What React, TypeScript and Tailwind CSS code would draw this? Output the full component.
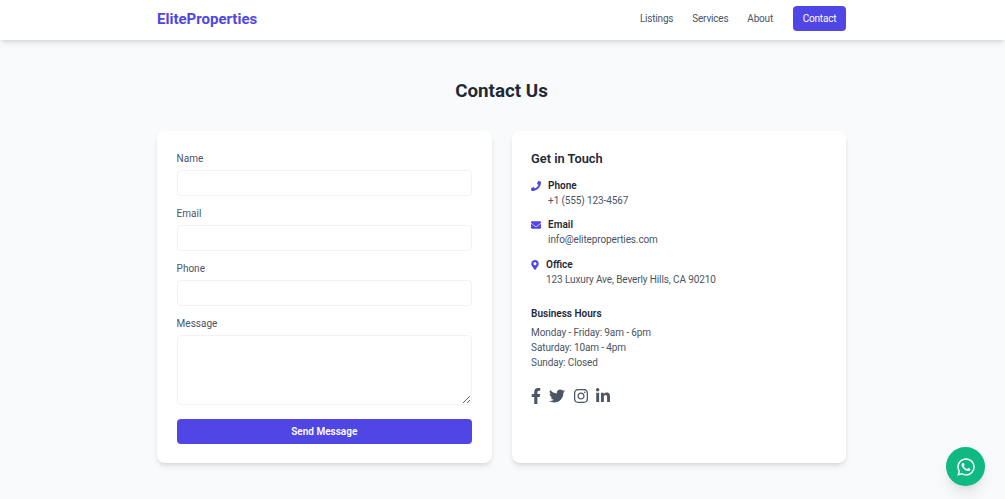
import { FaEnvelope, FaFacebookF, FaInstagram, FaLinkedinIn, FaMapMarkerAlt, FaPhone, FaTwitter, FaWhatsapp } from 'react-icons/fa';
import type { ReactNode } from 'react';

function Field({ label, children }: { label: string; children: ReactNode }) {
  return (
    <div className="mb-[10px]">
      <label className="block h-[19px] pt-px text-[10px] leading-[14px] text-[#4b5563]">{label}</label>
      {children}
    </div>
  );
}

function ContactRow({ icon, title, value }: { icon: ReactNode; title: string; value: string }) {
  return (
    <div className="flex items-start gap-[7px] mb-[9.5px]">
      <span className="mt-[3px] text-[#4f46e5]">{icon}</span>
      <div>
        <div className="text-[10px] leading-[15px] font-semibold text-[#1f2937]">{title}</div>
        <div className="text-[10px] leading-[15px] tracking-[-0.12px] text-[#4b5563]">{value}</div>
      </div>
    </div>
  );
}

export default function App() {
  return (
    <div className="h-[499px] overflow-hidden bg-[#f9fafb] font-['Roboto',sans-serif] relative">
      <nav className="h-[40px] bg-white shadow-md">
        <div className="w-[689px] ml-[157px] h-full pb-[3px] flex items-center justify-between">
          <span className="mt-0.5 text-[15px] font-bold text-[#4f46e5]">EliteProperties</span>
          <div className="flex items-center gap-[19px] text-[10px] tracking-[-0.2px] text-[#4b5563]">
            <span>Listings</span>
            <span>Services</span>
            <span>About</span>
            <span className="w-[53px] h-[25px] ml-px flex items-center justify-center rounded bg-[#4f46e5] text-white">Contact</span>
          </div>
        </div>
      </nav>

      <main className="w-[689px] ml-[157px] pt-[37px]">
        <h1 className="text-[18.8px] leading-[28px] font-bold text-center text-[#1f2937] mb-[26px]">Contact Us</h1>
        <div className="grid grid-cols-2 gap-5">
          <div className="h-[332px] bg-white rounded-lg shadow-md p-[19.6px]">
            <Field label="Name">
              <input className="block w-full h-[26px] rounded border border-[#f1f2f4]" />
            </Field>
            <Field label="Email">
              <input className="block w-full h-[26px] rounded border border-[#f1f2f4]" />
            </Field>
            <Field label="Phone">
              <input className="block w-full h-[26px] rounded border border-[#f1f2f4]" />
            </Field>
            <Field label="Message">
              <textarea className="block w-full h-[70px] rounded border border-[#f1f2f4]" />
            </Field>
            <button className="w-full h-[25px] mt-1 rounded bg-[#4f46e5] text-white text-[10px] font-semibold">Send Message</button>
          </div>

          <div className="h-[332px] bg-white rounded-lg shadow-md p-[19.6px]">
            <h2 className="-mt-px text-[12.8px] leading-[18px] font-semibold text-[#1f2937] mb-[10px]">Get in Touch</h2>
            <ContactRow icon={<FaPhone className="w-[10px] h-[10px]" />} title="Phone" value="+1 (555) 123-4567" />
            <ContactRow icon={<FaEnvelope className="w-[10px] h-[10px]" />} title="Email" value="info@eliteproperties.com" />
            <ContactRow icon={<FaMapMarkerAlt className="w-2 h-[10px]" />} title="Office" value="123 Luxury Ave, Beverly Hills, CA 90210" />
            <h3 className="mt-[19px] text-[10px] leading-[15px] font-semibold text-[#1f2937] mb-1">Business Hours</h3>
            <div className="text-[10px] leading-[15px] tracking-[-0.12px] text-[#4b5563]">
              <p>Monday - Friday: 9am - 6pm</p>
              <p>Saturday: 10am - 4pm</p>
              <p>Sunday: Closed</p>
            </div>
            <div className="flex items-center gap-[8.4px] mt-[18px] text-[#4b5563]">
              <FaFacebookF className="w-[10px] h-4" />
              <FaTwitter className="w-4 h-4" />
              <FaInstagram className="w-[14px] h-4" />
              <FaLinkedinIn className="w-[14px] h-4" />
            </div>
          </div>
        </div>
      </main>

      <div className="absolute right-5 bottom-[13px] w-[39px] h-[39px] rounded-full bg-[#10b981] shadow-lg flex items-center justify-center text-white text-[20px]">
        <FaWhatsapp />
      </div>
    </div>
  );
}
